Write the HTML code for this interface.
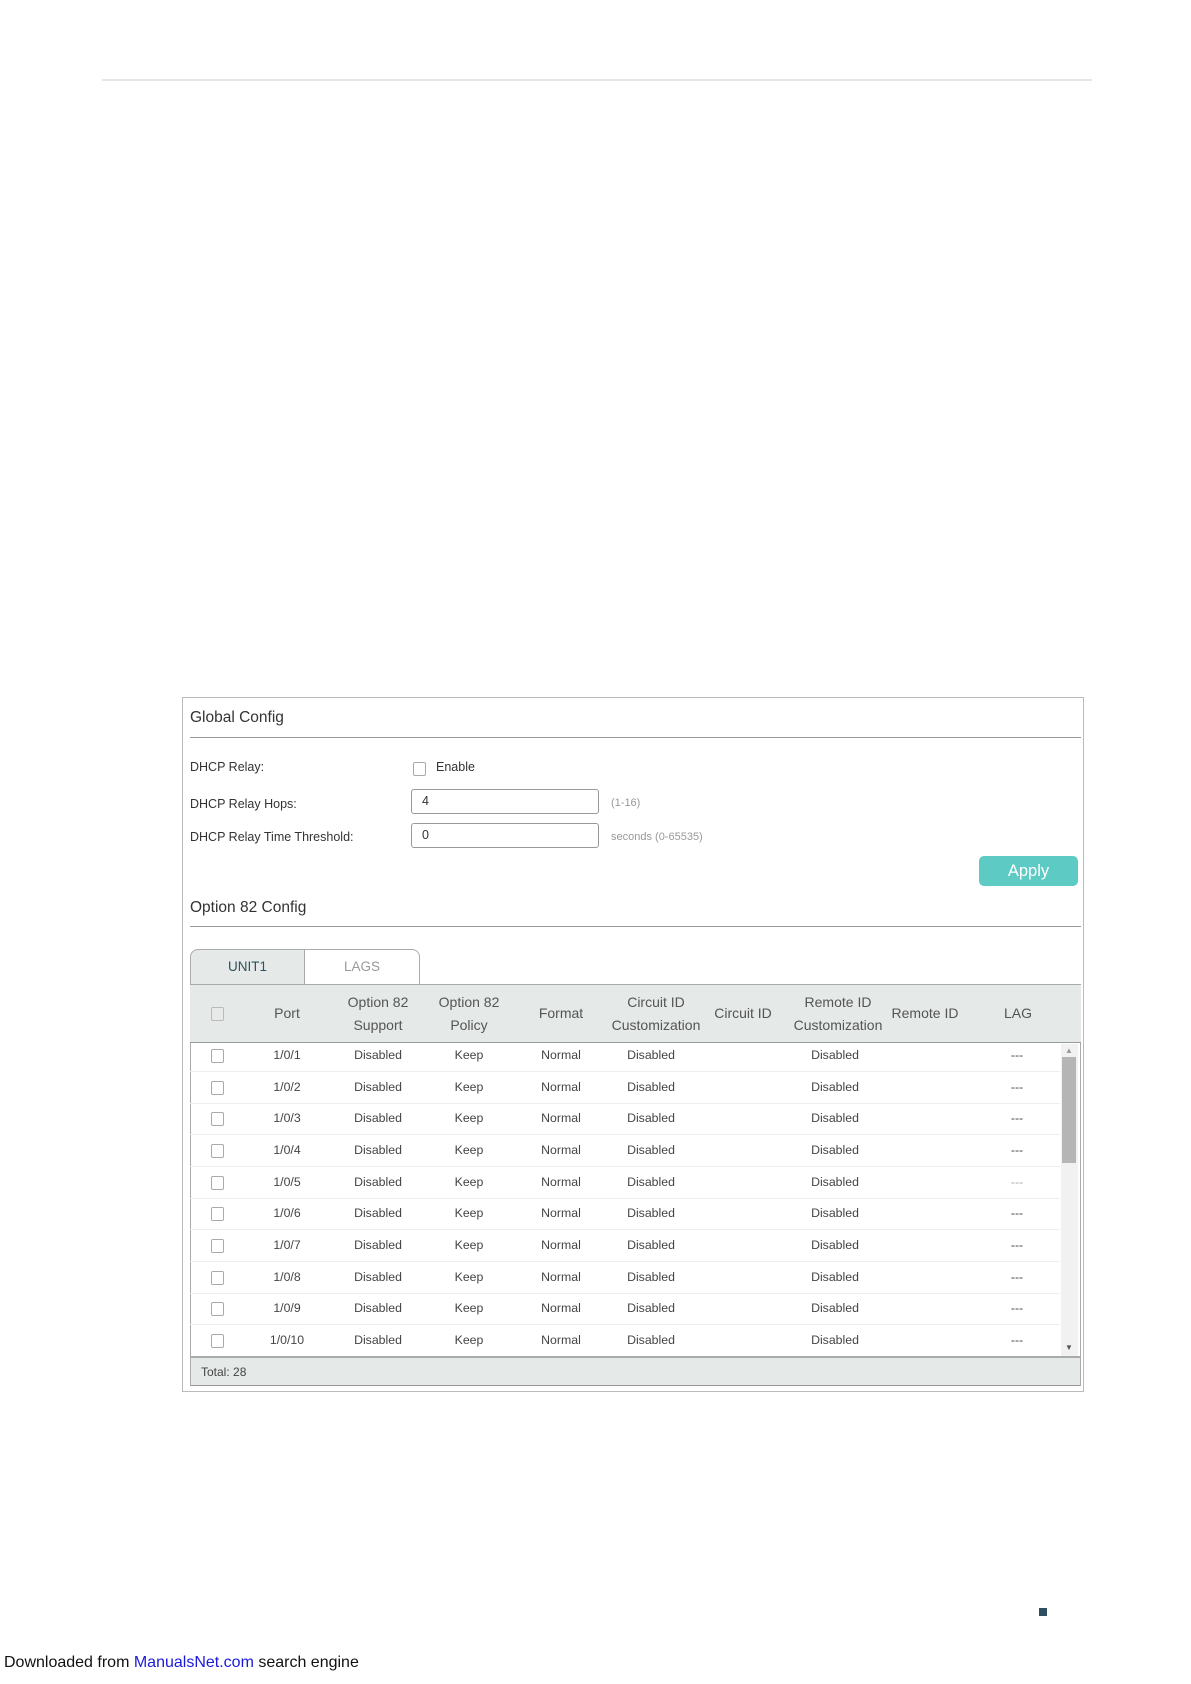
<!DOCTYPE html>
<html><head><meta charset="utf-8"><style>
*{margin:0;padding:0;box-sizing:border-box}
body{width:1191px;height:1684px;background:#fff;position:relative;font-family:"Liberation Sans",Arial,sans-serif;color:#333;overflow:hidden}
.a{position:absolute;white-space:nowrap}
.c{transform:translateX(-50%);text-align:center}
.cb{position:absolute;width:13px;height:14px;border:1px solid #aaa;border-radius:2px;background:#fff}
.inp{position:absolute;border:1px solid #999;border-radius:3px;height:25px;width:188px;left:411px;font-size:12.5px;padding:4px 10px;color:#333}
.row{position:absolute;left:190px;width:870px;height:32px;border-bottom:1px solid #eee;font-size:12.3px;color:#444}
.row span{position:absolute;top:8px;transform:translateX(-50%)}
.hd{font-size:14px;color:#555;line-height:23px}
.lb{font-size:12.5px}
</style></head><body>
<div class="a" style="left:102px;top:79px;width:990px;height:2px;background:#e6e6e6"></div>

<div class="a" style="left:182px;top:697px;width:902px;height:695px;border:1px solid #bbb"></div>
<div class="a" style="left:190px;top:709px;font-size:15.5px;color:#333">Global Config</div>
<div class="a" style="left:190px;top:737px;width:891px;height:1px;background:#999"></div>

<div class="a lb" style="left:190px;top:760px">DHCP Relay:</div>
<div class="cb" style="left:413px;top:762px"></div>
<div class="a lb" style="left:436px;top:760px">Enable</div>
<div class="a lb" style="left:190px;top:797px">DHCP Relay Hops:</div>
<div class="inp" style="top:789px">4</div>
<div class="a" style="left:611px;top:797px;font-size:11px;color:#999">(1-16)</div>
<div class="a lb" style="left:190px;top:830px">DHCP Relay Time Threshold:</div>
<div class="inp" style="top:823px">0</div>
<div class="a" style="left:611px;top:831px;font-size:11px;color:#999">seconds (0-65535)</div>

<div class="a" style="left:979px;top:856px;width:99px;height:30px;background:#5ecac4;border-radius:5px;color:#fff;font-size:16.5px;text-align:center;line-height:30px">Apply</div>

<div class="a" style="left:190px;top:899px;font-size:15.5px;color:#333">Option 82 Config</div>
<div class="a" style="left:190px;top:926px;width:891px;height:1px;background:#999"></div>

<div class="a" style="left:190px;top:949px;width:115px;height:36px;background:#e5e9e8;border:1px solid #aaa;border-bottom:none;border-radius:8px 0 0 0;color:#2e5260;font-size:13.5px;text-align:center;line-height:34px">UNIT1</div>
<div class="a" style="left:305px;top:949px;width:115px;height:36px;background:#fff;border:1px solid #aaa;border-left:none;border-radius:0 8px 0 0;color:#999;font-size:13.5px;text-align:center;line-height:34px">LAGS</div>

<div class="a" style="left:190px;top:984px;width:891px;height:402px;border:1px solid #aaa;border-top:none;border-bottom:none"></div>
<div class="a" style="left:190px;top:984px;width:891px;height:59px;background:#e5e9e8;border-top:1px solid #aaa;border-bottom:1px solid #999"></div>
<div class="cb" style="left:211px;top:1007px;background:#e8eaea;border-color:#bbb"></div>
<div class="a c hd" style="left:287px;top:1002px">Port</div>
<div class="a c hd" style="left:378px;top:991px">Option 82<br>Support</div>
<div class="a c hd" style="left:469px;top:991px">Option 82<br>Policy</div>
<div class="a c hd" style="left:561px;top:1002px">Format</div>
<div class="a c hd" style="left:656px;top:991px">Circuit ID<br>Customization</div>
<div class="a c hd" style="left:743px;top:1002px">Circuit ID</div>
<div class="a c hd" style="left:838px;top:991px">Remote ID<br>Customization</div>
<div class="a c hd" style="left:925px;top:1002px">Remote ID</div>
<div class="a c hd" style="left:1018px;top:1002px">LAG</div>

<div class="row" style="top:1040px"><div class="cb" style="left:21px;top:9px"></div><span style="left:97px">1/0/1</span><span style="left:188px">Disabled</span><span style="left:279px">Keep</span><span style="left:371px">Normal</span><span style="left:461px">Disabled</span><span style="left:645px">Disabled</span><span style="left:827px">---</span></div>
<div class="row" style="top:1072px"><div class="cb" style="left:21px;top:9px"></div><span style="left:97px">1/0/2</span><span style="left:188px">Disabled</span><span style="left:279px">Keep</span><span style="left:371px">Normal</span><span style="left:461px">Disabled</span><span style="left:645px">Disabled</span><span style="left:827px">---</span></div>
<div class="row" style="top:1103px"><div class="cb" style="left:21px;top:9px"></div><span style="left:97px">1/0/3</span><span style="left:188px">Disabled</span><span style="left:279px">Keep</span><span style="left:371px">Normal</span><span style="left:461px">Disabled</span><span style="left:645px">Disabled</span><span style="left:827px">---</span></div>
<div class="row" style="top:1135px"><div class="cb" style="left:21px;top:9px"></div><span style="left:97px">1/0/4</span><span style="left:188px">Disabled</span><span style="left:279px">Keep</span><span style="left:371px">Normal</span><span style="left:461px">Disabled</span><span style="left:645px">Disabled</span><span style="left:827px">---</span></div>
<div class="row" style="top:1167px"><div class="cb" style="left:21px;top:9px"></div><span style="left:97px">1/0/5</span><span style="left:188px">Disabled</span><span style="left:279px">Keep</span><span style="left:371px">Normal</span><span style="left:461px">Disabled</span><span style="left:645px">Disabled</span><span style="left:827px;color:#aaa">---</span></div>
<div class="row" style="top:1198px"><div class="cb" style="left:21px;top:9px"></div><span style="left:97px">1/0/6</span><span style="left:188px">Disabled</span><span style="left:279px">Keep</span><span style="left:371px">Normal</span><span style="left:461px">Disabled</span><span style="left:645px">Disabled</span><span style="left:827px">---</span></div>
<div class="row" style="top:1230px"><div class="cb" style="left:21px;top:9px"></div><span style="left:97px">1/0/7</span><span style="left:188px">Disabled</span><span style="left:279px">Keep</span><span style="left:371px">Normal</span><span style="left:461px">Disabled</span><span style="left:645px">Disabled</span><span style="left:827px">---</span></div>
<div class="row" style="top:1262px"><div class="cb" style="left:21px;top:9px"></div><span style="left:97px">1/0/8</span><span style="left:188px">Disabled</span><span style="left:279px">Keep</span><span style="left:371px">Normal</span><span style="left:461px">Disabled</span><span style="left:645px">Disabled</span><span style="left:827px">---</span></div>
<div class="row" style="top:1293px"><div class="cb" style="left:21px;top:9px"></div><span style="left:97px">1/0/9</span><span style="left:188px">Disabled</span><span style="left:279px">Keep</span><span style="left:371px">Normal</span><span style="left:461px">Disabled</span><span style="left:645px">Disabled</span><span style="left:827px">---</span></div>
<div class="row" style="top:1325px;border-bottom:none"><div class="cb" style="left:21px;top:9px"></div><span style="left:97px">1/0/10</span><span style="left:188px">Disabled</span><span style="left:279px">Keep</span><span style="left:371px">Normal</span><span style="left:461px">Disabled</span><span style="left:645px">Disabled</span><span style="left:827px">---</span></div>

<div class="a" style="left:1061px;top:1044px;width:17px;height:312px;background:#f1f1f1"></div>
<div class="a" style="left:1062px;top:1057px;width:14px;height:106px;background:#b5b5b5"></div>
<div class="a" style="left:1065px;top:1046px;font-size:8px;color:#999">▲</div>
<div class="a" style="left:1065px;top:1343px;font-size:8px;color:#555">▼</div>

<div class="a" style="left:190px;top:1356px;width:891px;height:30px;background:#e5e9e8;border:1px solid #aaa;border-top:2px solid #aaa;border-bottom:1px solid #999;font-size:12px;color:#444;padding:7px 10px">Total: 28</div>

<div class="a" style="left:1039px;top:1608px;width:8px;height:8px;background:#2e4f60"></div>
<div class="a" style="left:4px;top:1654px;font-size:16px;color:#111">Downloaded from <span style="color:#1a1adb">ManualsNet.com</span> search engine</div>
</body></html>
